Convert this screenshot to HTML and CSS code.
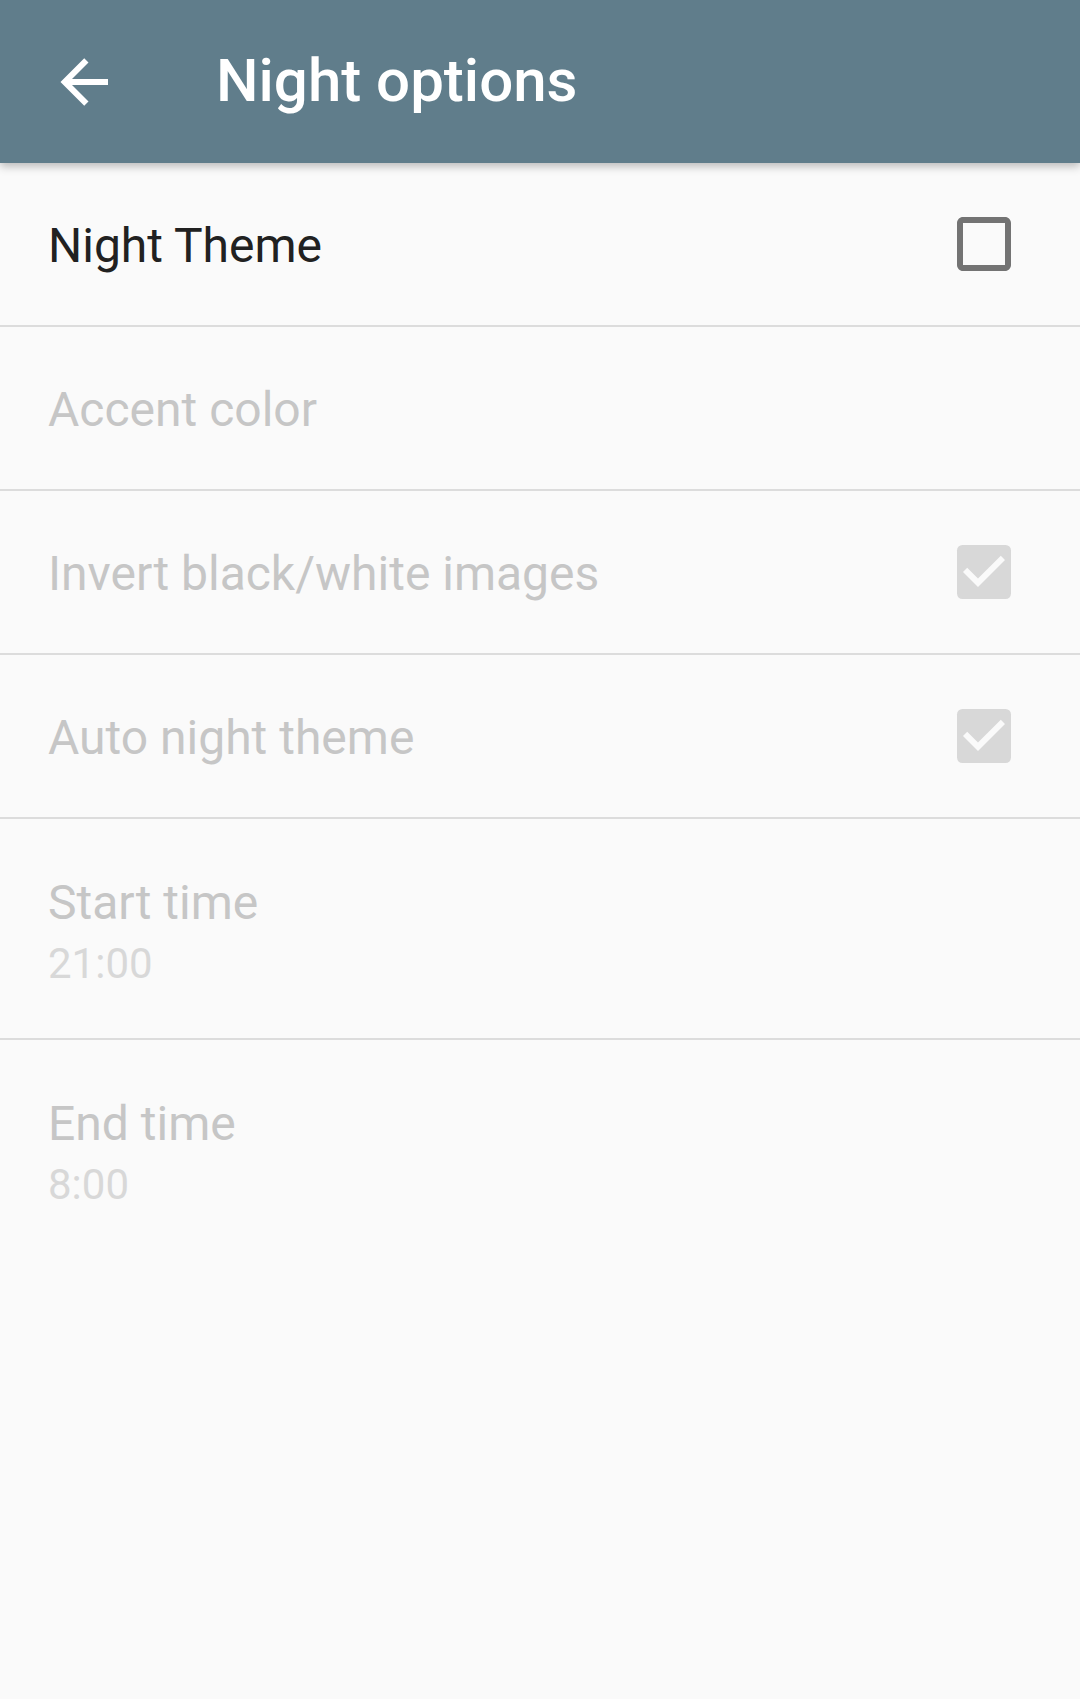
FILE: index.html
```html
<!DOCTYPE html>
<html lang="en">
<head>
<meta charset="utf-8">
<title>Night options</title>
<link rel="stylesheet" href="styles.css">
</head>
<body>
<header class="toolbar">
  <button class="nav-btn" aria-label="Back">
    <svg viewBox="0 0 24 24" width="72" height="72"><path d="M20,11V13H8L13.5,18.5L12.08,19.92L4.16,12L12.08,4.08L13.5,5.5L8,11H20Z" fill="#ffffff"/></svg>
  </button>
  <h1 class="title">Night options</h1>
</header>
<main class="list">
  <div class="row">
    <span class="row-title">Night Theme</span>
    <svg class="check" viewBox="0 0 24 24" width="72" height="72"><path d="M19 5v14H5V5h14m0-2H5c-1.1 0-2 .9-2 2v14c0 1.1.9 2 2 2h14c1.1 0 2-.9 2-2V5c0-1.1-.9-2-2-2z" fill="#737373"/></svg>
  </div>
  <div class="row">
    <span class="row-title disabled">Accent color</span>
  </div>
  <div class="row">
    <span class="row-title disabled">Invert black/white images</span>
    <svg class="check" viewBox="0 0 24 24" width="72" height="72"><rect x="3" y="3" width="18" height="18" rx="1.8" fill="#d8d8d8"/><path d="M10 17l-5-5 1.41-1.41L10 14.17l7.59-7.59L19 8z" fill="#fafafa"/></svg>
  </div>
  <div class="row">
    <span class="row-title disabled">Auto night theme</span>
    <svg class="check" viewBox="0 0 24 24" width="72" height="72"><rect x="3" y="3" width="18" height="18" rx="1.8" fill="#d8d8d8"/><path d="M10 17l-5-5 1.41-1.41L10 14.17l7.59-7.59L19 8z" fill="#fafafa"/></svg>
  </div>
  <div class="row row-two">
    <div class="row-text">
      <span class="row-title disabled">Start time</span>
      <span class="row-summary">21:00</span>
    </div>
  </div>
  <div class="row row-two last">
    <div class="row-text">
      <span class="row-title disabled">End time</span>
      <span class="row-summary">8:00</span>
    </div>
  </div>
</main>
</body>
</html>
```
FILE: styles.css
```css
html, body {
  margin: 0;
  padding: 0;
  background: #fafafa;
  font-family: Roboto, "Liberation Sans", sans-serif;
}
body {
  min-height: 1699px;
}
.toolbar {
  position: relative;
  z-index: 2;
  height: 163px;
  background: #607d8b;
  display: flex;
  align-items: center;
  box-shadow: 0 3px 9px rgba(0, 0, 0, 0.28);
}
.nav-btn {
  margin-left: 48px;
  width: 72px;
  height: 72px;
  padding: 0;
  border: 0;
  background: none;
  display: flex;
  align-items: center;
  justify-content: center;
}
.nav-btn svg {
  display: block;
}
.title {
  margin: 0 0 0 96px;
  color: #ffffff;
  font-size: 60px;
  font-weight: 500;
  line-height: 1;
  padding-bottom: 2px;
}
.list {
  display: flex;
  flex-direction: column;
}
.row {
  height: 162px;
  box-sizing: content-box;
  border-bottom: 2px solid #dcdcdc;
  display: flex;
  align-items: center;
  justify-content: space-between;
  padding: 0 60px 0 48px;
}
.row > .row-title {
  margin-top: 4px;
}
.row.row-two {
  height: auto;
  align-items: flex-start;
  padding-top: 54px;
  padding-bottom: 49px;
}
.row.last {
  border-bottom: 0;
}
.row-text {
  display: flex;
  flex-direction: column;
}
.row-title {
  font-size: 48px;
  line-height: 60px;
  color: #212121;
}
.row-title.disabled {
  color: #c6c6c6;
}
.row-summary {
  margin-top: 6px;
  font-size: 42px;
  line-height: 50px;
  color: #d8d8d8;
}
.check {
  display: block;
  flex: none;
}
```
